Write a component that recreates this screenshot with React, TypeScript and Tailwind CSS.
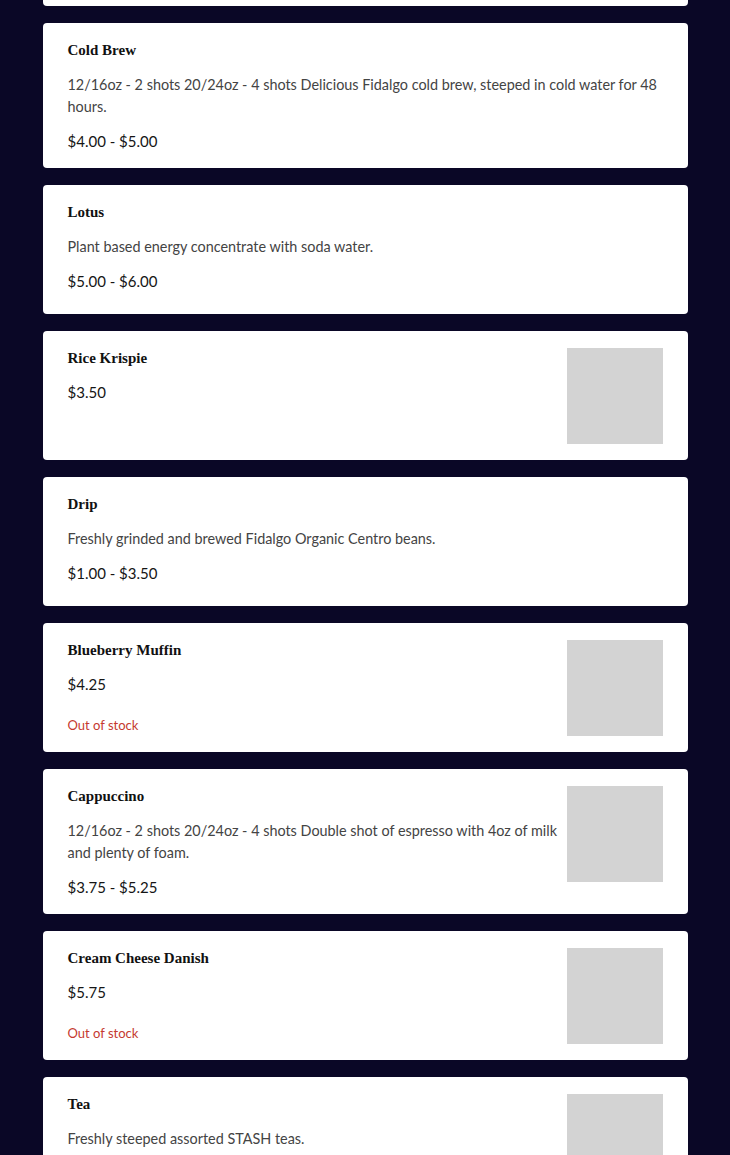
type Item = {
  name: string;
  description?: string;
  price: string;
  image?: boolean;
  outOfStock?: boolean;
};

const items: Item[] = [
  {
    name: "Cold Brew",
    description:
      "12/16oz - 2 shots 20/24oz - 4 shots Delicious Fidalgo cold brew, steeped in cold water for 48 hours.",
    price: "$4.00 - $5.00",
  },
  { name: "Lotus", description: "Plant based energy concentrate with soda water.", price: "$5.00 - $6.00" },
  { name: "Rice Krispie", price: "$3.50", image: true },
  { name: "Drip", description: "Freshly grinded and brewed Fidalgo Organic Centro beans.", price: "$1.00 - $3.50" },
  { name: "Blueberry Muffin", price: "$4.25", image: true, outOfStock: true },
  {
    name: "Cappuccino",
    description: "12/16oz - 2 shots 20/24oz - 4 shots Double shot of espresso with 4oz of milk and plenty of foam.",
    price: "$3.75 - $5.25",
    image: true,
  },
  { name: "Cream Cheese Danish", price: "$5.75", image: true, outOfStock: true },
  { name: "Tea", description: "Freshly steeped assorted STASH teas.", price: "$2.50 - $3.50", image: true },
];

function MenuCard({ item }: { item: Item }) {
  return (
    <div className="flex min-h-[129px] gap-[8px] rounded-[4px] bg-white pt-[17px] pb-[16px] pl-[25px] pr-[25px]">
      <div className="flex flex-1 flex-col">
        <h3 className="font-['Liberation_Serif',serif] text-[15px] font-bold leading-[21px] text-[#111]">
          {item.name}
        </h3>
        {item.description && (
          <p className="mt-[13px] text-[14.4px] leading-[22px] text-[#444]">{item.description}</p>
        )}
        <p className="mt-[12px] text-[15px] leading-[22px] text-[#151515]">{item.price}</p>
        {item.outOfStock && (
          <p className="mt-[21px] text-[13px] leading-[18px] text-[#c53a2f]">Out of stock</p>
        )}
      </div>
      {item.image && <div className="h-[96px] w-[96px] shrink-0 bg-[#d3d3d3]" />}
    </div>
  );
}

export default function App() {
  return (
    <div className="h-screen overflow-hidden bg-[#0a0726] font-['Lato',sans-serif]">
      <div className="mx-auto flex w-[645px] flex-col gap-[17px]">
        {/* tail of the card scrolled above */}
        <div className="h-[6px] rounded-b-[4px] bg-white" />
        {items.map((item) => (
          <MenuCard key={item.name} item={item} />
        ))}
      </div>
    </div>
  );
}
